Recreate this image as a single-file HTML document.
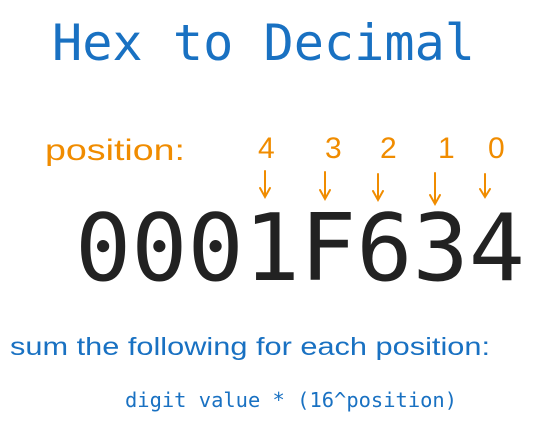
<!DOCTYPE html>
<html><head><meta charset="utf-8"><style>
html,body{margin:0;padding:0;background:#fff;}
svg{display:block}
</style></head><body>
<svg width="538" height="423" viewBox="0 0 538 423" xmlns="http://www.w3.org/2000/svg">
<text x="52" y="60" font-family="DejaVu Sans Mono, Liberation Mono, monospace" font-size="50" fill="#1971c2" textLength="423" lengthAdjust="spacingAndGlyphs">Hex to Decimal</text>
<g font-family="Liberation Sans, sans-serif" fill="#f08c00">
<text x="45" y="160" font-size="30" textLength="140" lengthAdjust="spacingAndGlyphs">position:</text>
<text x="258" y="158" font-size="30">4</text>
<text x="325" y="158" font-size="30">3</text>
<text x="380" y="158" font-size="30">2</text>
<text x="438" y="158" font-size="30">1</text>
<text x="488" y="158" font-size="30">0</text>
</g>
<g stroke="#f08c00" stroke-width="2" fill="none" stroke-linecap="round">
<path d="M265 171 V197 M260 188 L265 197 L270 188"/>
<path d="M325 172 V199 M320 190 L325 199 L330 190"/>
<path d="M378 174 V200 M373 191 L378 200 L383 191"/>
<path d="M435 173 V204 M430 195 L435 204 L440 195"/>
<path d="M485 174 V197 M480 189 L485 197 L490 189"/>
</g>
<text x="75" y="280" font-family="DejaVu Sans Mono, Liberation Mono, monospace" font-size="93" fill="#222" textLength="450" lengthAdjust="spacingAndGlyphs">0001F634</text>
<text x="10" y="355" font-family="Liberation Sans, sans-serif" font-size="25" fill="#1971c2" textLength="480" lengthAdjust="spacingAndGlyphs">sum the following for each position:</text>
<text x="125" y="407" font-family="DejaVu Sans Mono, Liberation Mono, monospace" font-size="20" fill="#1971c2" textLength="332" lengthAdjust="spacingAndGlyphs">digit value * (16^position)</text>
</svg>
</body></html>
